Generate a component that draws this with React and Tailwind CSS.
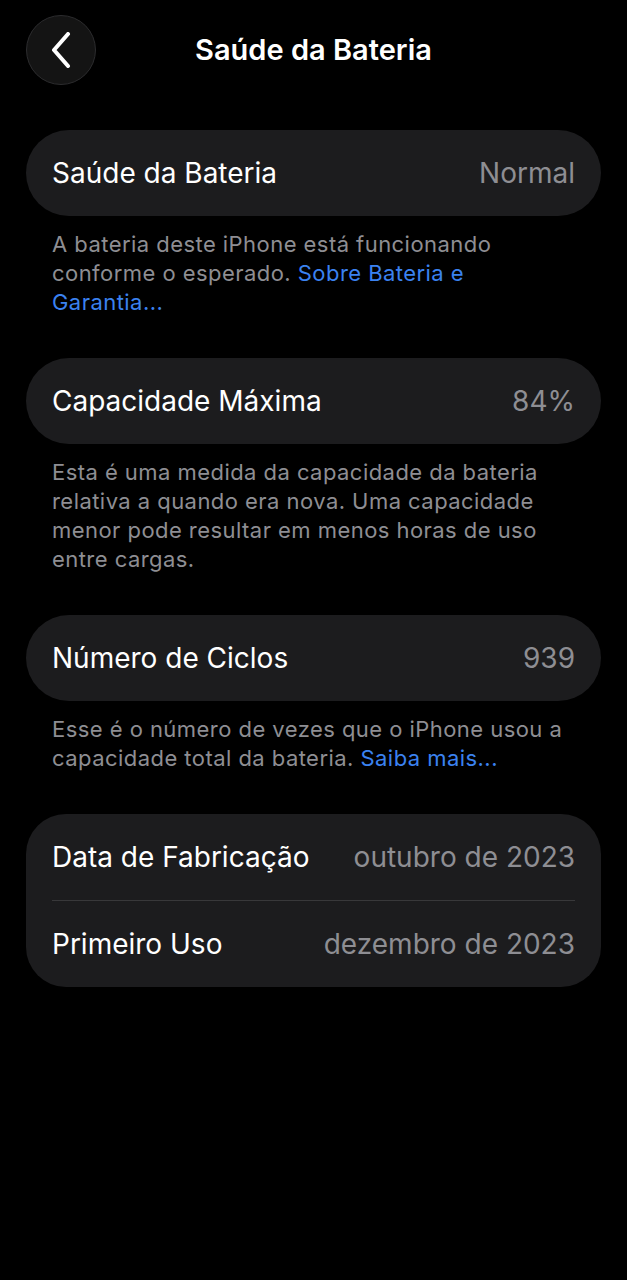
const Card = ({ children }) => (
  <div className="mx-[26px] rounded-[44px] bg-[#1c1c1e]">{children}</div>
);

const Row = ({ label, value }) => (
  <div className="flex h-[86px] items-center justify-between px-[26px]">
    <span className="text-[28px] text-white">{label}</span>
    <span className="text-[28px] text-[#8e8e93]">{value}</span>
  </div>
);

const Note = ({ children }) => (
  <p className="mx-[52px] mt-[14px] mb-[41px] text-[22px] leading-[29px] tracking-[0.45px] text-[#8e8e93]">
    {children}
  </p>
);

export default function App() {
  return (
    <div
      className="min-h-[1280px] bg-black pt-[15px]"
      style={{ fontFamily: "Inter, 'Noto Sans', sans-serif" }}
    >
      {/* cabeçalho */}
      <div className="relative flex h-[70px] items-center justify-center">
        <button className="absolute left-[26px] top-0 flex h-[70px] w-[70px] items-center justify-center rounded-full border border-[#2c2c2e] bg-[#141414]">
          <svg width="22" height="36" viewBox="0 0 22 36" fill="none">
            <path
              d="M18 2 L4 18 L18 34"
              stroke="white"
              strokeWidth="4"
              strokeLinecap="round"
              strokeLinejoin="round"
            />
          </svg>
        </button>
        <h1 className="text-[29px] font-semibold text-white">Saúde da Bateria</h1>
      </div>

      <div className="mt-[45px]">
        <Card>
          <Row label="Saúde da Bateria" value="Normal" />
        </Card>
        <Note>
          A bateria deste iPhone está funcionando conforme o esperado.{" "}
          <span className="text-[#3b82f0]">Sobre Bateria e Garantia...</span>
        </Note>

        <Card>
          <Row label="Capacidade Máxima" value="84%" />
        </Card>
        <Note>
          Esta é uma medida da capacidade da bateria relativa a quando era nova. Uma
          capacidade menor pode resultar em menos horas de uso entre cargas.
        </Note>

        <Card>
          <Row label="Número de Ciclos" value="939" />
        </Card>
        <Note>
          Esse é o número de vezes que o iPhone usou a capacidade total da bateria.{" "}
          <span className="text-[#3b82f0]">Saiba mais...</span>
        </Note>

        <div className="mx-[26px] rounded-[40px] bg-[#1c1c1e]">
          <Row label="Data de Fabricação" value="outubro de 2023" />
          <div className="mx-[26px] h-px bg-[#38383a]" />
          <Row label="Primeiro Uso" value="dezembro de 2023" />
        </div>
      </div>
    </div>
  );
}
